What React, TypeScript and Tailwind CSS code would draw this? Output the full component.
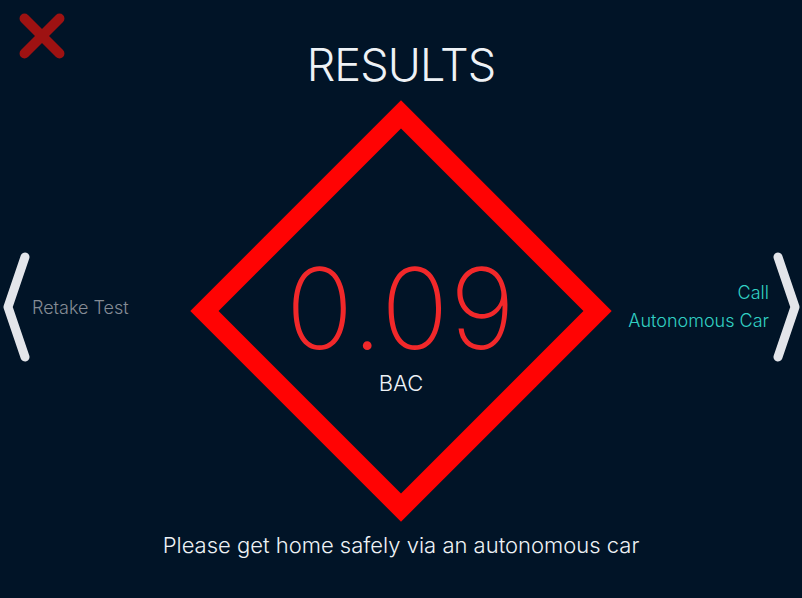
import { X } from 'lucide-react';

export default function App() {
  return (
    <div
      className="relative flex h-[598px] w-full flex-col items-center overflow-hidden bg-[#011427] text-[#eef2f6]"
      style={{ fontFamily: 'Inter, "Noto Sans", sans-serif' }}
    >
      <button type="button" aria-label="Close" className="absolute left-[7px] top-[1px] text-[#9e1212]">
        <X size={70} strokeWidth={3.4} />
      </button>

      <h1 className="mt-[42px] text-[45px] font-light leading-none tracking-[-0.02em]">RESULTS</h1>

      <div className="mt-[13px] grid w-full grid-cols-[1fr_422px_1fr] items-center">
        <button type="button" className="flex items-center gap-[2px] justify-self-start pb-[8px]">
          <Chevron dir="left" />
          <span className="text-[18px] font-light text-[#858c95]">Retake Test</span>
        </button>

        <ResultDiamond value="0.09" label="BAC" />

        <button type="button" className="flex items-center gap-[3px] justify-self-end pb-[8px]">
          <span className="text-right text-[18px] font-light leading-[28px] text-[#31d0c3]">
            Call
            <br />
            Autonomous Car
          </span>
          <Chevron dir="right" />
        </button>
      </div>

      <p className="mt-[12px] text-[22px] font-light leading-none">Please get home safely via an autonomous car</p>
    </div>
  );
}

function ResultDiamond({ value, label }: { value: string; label: string }) {
  return (
    <div className="relative flex h-[422px] w-[422px] flex-col items-center pt-[160px]">
      <div className="absolute left-[62px] top-[62px] h-[298px] w-[298px] rotate-45 border-[20px] border-[#ff0303]" />
      <span className="relative text-[112px] font-extralight leading-[96px] tracking-[0.01em] text-[#f2282a]">
        {value}
      </span>
      <span className="relative mt-[16px] text-[22px] font-light leading-none">{label}</span>
    </div>
  );
}

function Chevron({ dir }: { dir: 'left' | 'right' }) {
  const d = dir === 'left' ? 'M25 6 L8 56 L25 106' : 'M6 6 L23 56 L6 106';
  return (
    <svg width="30" height="112" viewBox="0 0 30 112" fill="none" aria-hidden="true">
      <path d={d} stroke="#e3e5ea" strokeWidth="9" strokeLinecap="round" strokeLinejoin="round" />
    </svg>
  );
}
